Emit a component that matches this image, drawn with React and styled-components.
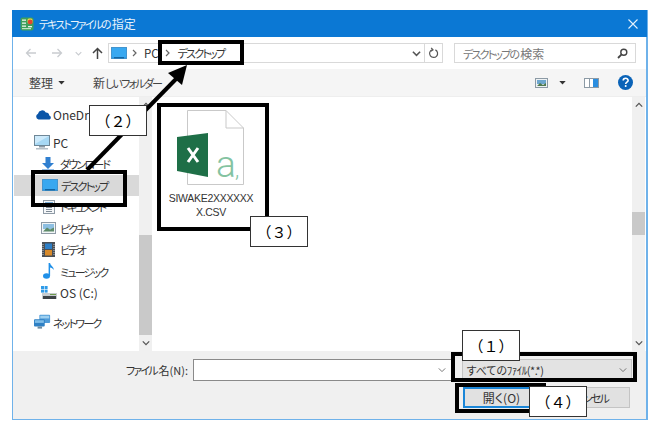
import React from "react";
import styled, { createGlobalStyle } from "styled-components";

const Global = createGlobalStyle`
  html, body { margin: 0; padding: 0; background: #fff; }
  body {
    width: 661px; height: 435px; overflow: hidden;
    font-family: "Noto Sans CJK JP", "Noto Sans", sans-serif;
    font-feature-settings: "palt";
  }
`;
const Page = styled.div`
  position: relative; width: 661px; height: 435px; padding: 10px 0 0 12px; box-sizing: border-box;
`;
const Dialog = styled.div`
  width: 636px; height: 410px; display: flex; flex-direction: column; box-sizing: border-box;
  border-left: 1px solid #6fb2ea; border-right: 2px solid #6fb2ea; border-bottom: 1px solid #6fb2ea; background: #fff; color: #222;
`;
const TitleBar = styled.div`
  height: 27px; margin: 0 -1px; flex: none; background: #0b78d4; display: flex; align-items: center;
  padding: 0 9px 0 8px; gap: 5px; font-size: 12px;
`;
const TitleText = styled.span`flex: 1; color: #e9f3fb;`;
const AddressRow = styled.div`
  height: 32px; flex: none; display: flex; align-items: center; padding: 0 10px 0 11px; background: #fff;
`;
const NavGroup = styled.div`display: flex; align-items: center; width: 84px;`;
const NavSlot = styled.span`
  width: ${p => p.$w}px; margin-left: ${p => p.$ml || 0}px; display: flex; align-items: center; justify-content: center;
`;
const AddressBox = styled.div`
  width: 335px; height: 20px; box-sizing: border-box; border: 1px solid #d9d9d9; display: flex; align-items: center;
  font-size: 11.5px; color: #333; margin-right: 11px; padding-left: 2px;
`;
const Crumb = styled.span`display: flex; align-items: center; margin-left: ${p => p.$ml || 0}px;`;
const RefreshCell = styled.span`
  width: 17px; height: 18px; margin-left: 3px; display: flex; align-items: center; justify-content: center; border-left: 1px solid #d9d9d9;
`;
const SearchBox = styled.div`
  width: 182px; height: 20px; box-sizing: border-box; border: 1px solid #d9d9d9; display: flex; align-items: center; justify-content: space-between;
  padding: 0 7px 0 8px; font-size: 12px; color: #777;
`;
const Toolbar = styled.div`
  height: 28px; flex: none; display: flex; align-items: center; background: #f5f5f5; padding: 0 13px 0 16px;
  font-size: 12px; color: #444; border-bottom: 1px solid #eee; box-sizing: border-box;
`;
const ToolButton = styled.span`display: flex; align-items: center; gap: ${p => p.$gap || 5}px; margin-right: ${p => p.$mr || 0}px;`;
const Spacer = styled.span`flex: 1;`;
const Main = styled.div`height: 254px; flex: none; display: flex; background: #fff;`;
const Sidebar = styled.nav`width: 126px; flex: none; display: flex; flex-direction: column; padding-top: 6px; box-sizing: border-box;`;
const Item = styled.div`
  height: ${p => p.$h || 21.5}px; flex: none; display: flex; align-items: center; padding-left: ${p => p.$indent}px; gap: ${p => p.$gap}px;
  font-size: 12px; color: #333; white-space: nowrap; background: ${p => p.$active ? "#d9d9d9" : "transparent"};
  margin-top: ${p => p.$mt || 0}px; margin-left: ${p => p.$active ? 1 : 0}px;
`;
const ScrollBar = styled.div`
  width: 13px; flex: none; margin-right: ${p => p.$mr || 0}px; background: #f0f0f0; display: flex; flex-direction: column; align-items: center;
`;
const ScrollArrow = styled.span`height: 16px; display: flex; align-items: center; justify-content: center; flex: none;`;
const Track = styled.div`flex: 1; width: 100%; display: flex; flex-direction: column;`;
const Thumb = styled.div`
  flex: none; height: ${p => p.$h}px; margin-top: ${p => p.$top}px; background: #c9c9c9; width: 100%;
`;
const Content = styled.div`flex: 1; padding: 13px 0 0 10px; background: #fff;`;
const FileTile = styled.div`width: 98px; display: flex; flex-direction: column; align-items: center;`;
const FileName = styled.div`
  margin-top: 5px; width: 98px; text-align: center; font-family: "Liberation Sans", sans-serif; font-size: 10.5px; line-height: 14px;
  color: #333; letter-spacing: -0.3px; white-space: nowrap;
`;
const Footer = styled.div`
  flex: 1; background: #f0f0f0; display: flex; flex-direction: column; padding: 8px 14px 0 0; box-sizing: border-box;
`;
const FieldRow = styled.div`display: flex; align-items: flex-start; justify-content: flex-end;`;
const FieldLabel = styled.span`font-size: 11px; color: #333; margin-right: 5px; line-height: 22px;`;
const NameInput = styled.div`
  width: 259px; height: 22px; box-sizing: border-box; background: #fff; border: 1px solid #8a8a8a; display: flex; align-items: center; justify-content: flex-end; padding-right: 5px; margin-right: 10px;
`;
const TypeSelect = styled.div`
  width: 170px; height: 22px; box-sizing: border-box; background: #e3e3e3; border: 1px solid #c4c4c4; display: flex; align-items: center; justify-content: space-between; padding: 0 4px 0 3px;
  font-size: 11px; color: #333; white-space: nowrap; font-feature-settings: normal; letter-spacing: -0.5px;
`;
const ButtonRow = styled.div`display: flex; justify-content: flex-end; gap: 7px; margin-top: 6px; margin-right: 2px;`;
const DialogButton = styled.div`
  height: 21px; width: ${p => p.$w}px; box-sizing: border-box; background: #e1e1e1; border: ${p => p.$primary ? "2px solid #1a86d8" : "1px solid #c4c4c4"};
  display: flex; align-items: center; justify-content: center; font-size: 12px; color: #333;
`;
const Frame = styled.div`
  position: absolute; left: ${p => p.$x}px; top: ${p => p.$y}px; width: ${p => p.$w}px; height: ${p => p.$h}px;
  box-sizing: border-box; border: 4px solid #000; pointer-events: none;
`;
const Note = styled.div`
  position: absolute; left: ${p => p.$x}px; top: ${p => p.$y}px; width: 58px; height: 31px; box-sizing: border-box;
  background: #fff; border: 1px solid #333; display: flex; align-items: center; justify-content: center;
  font-size: 15px; color: #000; font-feature-settings: normal;
`;
const ArrowLayer = styled.svg`position: absolute; left: 0; top: 0; width: 661px; height: 435px; pointer-events: none;`;
/* The dialog's UI font has compressed kana: kana runs get a tighter setting than kanji and latin. */
const KanaRun = styled.span`font-size: 11px; letter-spacing: -1.8px; margin-right: 1.8px;`;

const Jp = ({ children }) => (
  <span>
    {children.split(/([\u3040-\u30ff]+)/).map((run, i) =>
      i % 2 ? <KanaRun key={i}>{run}</KanaRun> : run
    )}
  </span>
);

const Chevron = ({ dir = "down", color = "#555", s = 9, w = 1.6 }) => (
  <svg width={s} height={s} viewBox="0 0 10 10" fill="none" stroke={color} strokeWidth={w}>
    <path d={dir === "down" ? "M1 3l4 4 4-4" : "M1 7l4-4 4 4"} />
  </svg>
);
const Sep = () => (
  <svg width="5" height="8" viewBox="0 0 5 8" fill="none" stroke="#666" strokeWidth="1.2"><path d="M1 1l3 3-3 3" /></svg>
);
const Caret = ({ c = "#333" }) => (
  <svg width="7" height="4" viewBox="0 0 8 5"><path d="M0 0h8L4 4.500z" fill={c} /></svg>
);
const HArrow = ({ flip, color = "#c9ccd0" }) => (
  <svg width="11" height="10" viewBox="0 0 11 10" fill="none" stroke={color} strokeWidth="1.3" style={flip ? { transform: "scaleX(-1)" } : undefined}>
    <path d="M11 5H1.500M5.500 1L1.500 5l4 4" />
  </svg>
);
const UpArrow = () => (
  <svg width="11" height="12" viewBox="0 0 11 12" fill="none" stroke="#444" strokeWidth="1.5"><path d="M5.500 12V1.500M1 6l4.500-4.500L10 6" /></svg>
);
const Refresh = () => (
  <svg width="11" height="12" viewBox="0 0 11 12" fill="none" stroke="#555" strokeWidth="1.2">
    <path d="M4 2.800a4 4 0 1 0 3.400.1" /><path d="M3.200 .8L5 2.900 2.800 4.200" />
  </svg>
);
const Magnifier = () => (
  <svg width="11" height="11" viewBox="0 0 11 11" fill="none" stroke="#444" strokeWidth="1.400"><circle cx="6.800" cy="4.200" r="3" /><path d="M4.600 6.400L1 10" strokeWidth="1.800" /></svg>
);
const TitleIcon = () => (
  <svg width="14" height="14" viewBox="0 0 14 14">
    <rect x="0.500" y="0.500" width="13" height="13" rx="2" fill="#3f9f5c" />
    <rect x="7.500" y="1.500" width="5" height="5" rx="1.500" fill="#e8e24a" />
    <circle cx="10.200" cy="5" r="2.400" fill="#e2452f" />
    <rect x="2" y="2.500" width="4" height="1.300" fill="#e9f5ea" /><rect x="2" y="5.500" width="4" height="1.300" fill="#e9f5ea" />
    <rect x="2" y="8.500" width="4" height="1.300" fill="#e9f5ea" /><rect x="8" y="9" width="4" height="1.300" fill="#e9f5ea" />
    <rect x="2" y="11" width="9" height="1.200" fill="#bfe3c6" />
  </svg>
);
const CloseX = () => (
  <svg width="10" height="10" viewBox="0 0 10 10" stroke="#e6f1fb" strokeWidth="1.100"><path d="M.5.500l9 9M9.500.500l-9 9" /></svg>
);
const DesktopIcon = ({ w = 16, h = 12 }) => (
  <svg width={w} height={h} viewBox="0 0 16 12">
    <rect x="0" y="0" width="16" height="12" fill="#2b9be8" stroke="#7a8a96" strokeWidth="0.600" />
    <rect x="1" y="1" width="14" height="9" fill="#38a8f0" />
    <rect x="3" y="10.300" width="10" height="1" fill="#0b4f85" />
  </svg>
);
const ViewIcon = () => (
  <svg width="13" height="10" viewBox="0 0 13 10">
    <rect x=".5" y=".5" width="12" height="9" fill="#eef2f4" stroke="#8c9aa5" />
    <rect x="2" y="2" width="9" height="4" fill="#6da7cf" /><path d="M2 8l3-3 3 2 3-2v3z" fill="#4f7a4f" />
  </svg>
);
const PaneIcon = () => (
  <svg width="15" height="10" viewBox="0 0 15 10">
    <rect x=".5" y=".5" width="14" height="9" fill="#fff" stroke="#8c9aa5" />
    <rect x="9" y="1" width="5" height="8" fill="#2b8ee0" /><rect x="5" y="1" width="1" height="8" fill="#8c9aa5" />
  </svg>
);
const HelpIcon = () => (
  <svg width="15" height="15" viewBox="0 0 15 15">
    <circle cx="7.500" cy="7.500" r="7.500" fill="#0a63b8" />
    <path d="M5.200 5.600c0-3 4.900-3 4.900-.2 0 1.800-2.400 1.800-2.400 3.600" fill="none" stroke="#fff" strokeWidth="1.600" />
    <circle cx="7.700" cy="11.100" r="1" fill="#fff" />
  </svg>
);
const CloudIcon = () => (
  <svg width="17" height="11" viewBox="0 0 17 11">
    <path d="M3.500 10.500A3 3 0 0 1 3 4.800 4.200 4.200 0 0 1 10.800 3.500 3.400 3.400 0 0 1 14.300 6.500 2.100 2.100 0 0 1 14.500 10.500z" fill="#0a55a8" />
  </svg>
);
const PcIcon = () => (
  <svg width="16" height="15" viewBox="0 0 16 15">
    <rect x=".5" y=".5" width="15" height="10" fill="#a7d8f4" stroke="#6f8797" />
    <path d="M1 1h14L1 9z" fill="#cdeafb" />
    <rect x="5" y="11" width="6" height="1.500" fill="#8b9aa5" /><rect x="2" y="13" width="12" height="1.500" fill="#b3bec6" />
  </svg>
);
const DownloadIcon = () => (
  <svg width="14" height="14" viewBox="0 0 14 14"><path d="M4.500 0h5v6H13L7 12 1 6h3.500z" fill="#2f7fd0" /><rect x="1" y="12.500" width="12" height="1.500" fill="#2f7fd0" /></svg>
);
const DocIcon = () => (
  <svg width="12" height="14" viewBox="0 0 12 14">
    <rect x=".5" y=".5" width="11" height="13" fill="#f5f7f9" stroke="#8f9ba6" />
    <rect x="2" y="2" width="8" height="3" fill="#7aaed8" />
    <path d="M3 7.500h6M3 9.500h6M3 11.500h6" stroke="#7f8b96" />
  </svg>
);
const PictureIcon = () => (
  <svg width="15" height="12" viewBox="0 0 15 12">
    <rect x=".5" y=".5" width="14" height="11" fill="#f1f5f7" stroke="#8f9ba6" />
    <rect x="2" y="2" width="11" height="5" fill="#8dbfe2" /><path d="M2 9.500l4-4 3 2 4-2v4z" fill="#5d8a68" />
  </svg>
);
const VideoIcon = () => (
  <svg width="13" height="15" viewBox="0 0 13 15">
    <rect width="13" height="15" fill="#4a4f55" />
    <rect x="3" y="1.500" width="7" height="5.500" fill="#2d7fc7" /><rect x="3" y="8" width="7" height="5.500" fill="#d88a2a" />
    <path d="M1 2v11M12 2v11" stroke="#bfc6cc" strokeDasharray="1 1" />
  </svg>
);
const MusicIcon = () => (
  <svg width="11" height="16" viewBox="0 0 11 16" fill="#2090e8">
    <ellipse cx="3.500" cy="13" rx="3.500" ry="2.800" />
    <path d="M5.600 13V0h1.500c.3 2.500 3.700 3.500 3.700 7-1-1.600-2.400-2.300-3.700-2.600V13z" />
  </svg>
);
const DriveIcon = () => (
  <svg width="17" height="14" viewBox="0 0 17 14">
    <g fill="#2f9be8"><rect x="0" y="0" width="3" height="3" /><rect x="3.600" y="0" width="3" height="3" /><rect x="0" y="3.600" width="3" height="3" /><rect x="3.600" y="3.600" width="3" height="3" /></g>
    <rect x="1" y="7" width="15" height="6" fill="#c6ccd0" /><rect x="2" y="10" width="13" height="3" fill="#3d4347" /><rect x="9" y="8" width="6" height="1" fill="#6f9a4c" />
  </svg>
);
const NetworkIcon = () => (
  <svg width="17" height="16" viewBox="0 0 19 16">
    <rect x="6" y="0" width="12" height="9" rx="1" fill="#4f9bd8" /><rect x="7" y="1" width="10" height="3" fill="#9ed0f0" />
    <rect x="0" y="5" width="12" height="8" rx="1" fill="#2f80c4" /><rect x="1" y="6" width="10" height="3" fill="#7fbde8" />
    <rect x="4" y="13" width="5" height="2.400" fill="#6b8aa0" />
  </svg>
);
const CsvIcon = () => (
  <svg width="68" height="76" viewBox="0 0 68 76">
    <path d="M10.500 .5H49L66.500 18V74.500H10.500z" fill="#fff" stroke="#c9c9c9" />
    <path d="M49 .5V18H66.500" fill="none" stroke="#c9c9c9" />
    <path d="M0 27L31 23V67L0 61z" fill="#1e6f47" />
    <path d="M11 38l10 14M21 38L11 52" stroke="#fff" strokeWidth="3" fill="none" />
    <text x="39" y="67" fontFamily="Roboto, sans-serif" fontWeight="300" fontSize="37" fill="#84c3a1">a</text>
    <text x="58" y="67" fontFamily="Roboto, sans-serif" fontWeight="300" fontSize="22" fill="#84c3a1">,</text>
  </svg>
);

const App = () => (
  <Page>
    <Global />
    <Dialog>
      <TitleBar>
        <TitleIcon />
        <TitleText><Jp>テキストファイルの指定</Jp></TitleText>
        <CloseX />
      </TitleBar>
      <AddressRow>
        <NavGroup>
          <NavSlot $w={12}><HArrow /></NavSlot>
          <NavSlot $w={12} $ml={15}><HArrow flip /></NavSlot>
          <NavSlot $w={8} $ml={11}><Chevron color="#c9ccd0" s={7} /></NavSlot>
          <NavSlot $w={12} $ml={9}><UpArrow /></NavSlot>
        </NavGroup>
        <AddressBox>
          <DesktopIcon />
          <Crumb $ml={5}><Sep /></Crumb>
          <Crumb $ml={7}>PC</Crumb>
          <Crumb $ml={6}><Sep /></Crumb>
          <Crumb $ml={8}><Jp>デスクトップ</Jp></Crumb>
          <Spacer />
          <Chevron s={9} w={1.7} />
          <RefreshCell><Refresh /></RefreshCell>
        </AddressBox>
        <SearchBox><Jp>デスクトップの検索</Jp><Magnifier /></SearchBox>
      </AddressRow>
      <Toolbar>
        <ToolButton $mr={28}>整理 <Caret /></ToolButton>
        <ToolButton><Jp>新しいフォルダー</Jp></ToolButton>
        <Spacer />
        <ToolButton $mr={18} $gap={11}><ViewIcon /><Caret /></ToolButton>
        <ToolButton $mr={19}><PaneIcon /></ToolButton>
        <HelpIcon />
      </Toolbar>
      <Main>
        <Sidebar>
          <Item $indent={22} $h={22} $gap={1}><CloudIcon />OneDrive</Item>
          <Item $indent={21} $h={22} $mt={6} $gap={3}><PcIcon />PC</Item>
          <Item $indent={28} $gap={5}><DownloadIcon /><Jp>ダウンロード</Jp></Item>
          <Item $indent={28} $active $gap={3}><DesktopIcon /><Jp>デスクトップ</Jp></Item>
          <Item $indent={30} $gap={5}><DocIcon /><Jp>ドキュメント</Jp></Item>
          <Item $indent={28} $gap={4}><PictureIcon /><Jp>ピクチャ</Jp></Item>
          <Item $indent={29} $gap={5}><VideoIcon /><Jp>ビデオ</Jp></Item>
          <Item $indent={30} $gap={6}><MusicIcon /><Jp>ミュージック</Jp></Item>
          <Item $indent={28} $gap={2}><DriveIcon />OS (C:)</Item>
          <Item $indent={21} $gap={2} $mt={8}><NetworkIcon /><Jp>ネットワーク</Jp></Item>
        </Sidebar>
        <ScrollBar>
          <ScrollArrow><Chevron dir="up" s={8} /></ScrollArrow>
          <Track><Thumb $top={122} $h={100} /></Track>
          <ScrollArrow><Chevron s={8} /></ScrollArrow>
        </ScrollBar>
        <Content>
          <FileTile>
            <CsvIcon />
            <FileName>SIWAKE2XXXXXX<br />X.CSV</FileName>
          </FileTile>
        </Content>
        <ScrollBar $mr={1}>
          <ScrollArrow><Chevron dir="up" s={8} /></ScrollArrow>
          <Track><Thumb $top={99} $h={23} /></Track>
          <ScrollArrow><Chevron s={8} /></ScrollArrow>
        </ScrollBar>
      </Main>
      <Footer>
        <FieldRow>
          <FieldLabel><Jp>ファイル名(N):</Jp></FieldLabel>
          <NameInput><Chevron s={8} w={1.1} color="#666" /></NameInput>
          <TypeSelect><span>すべてのﾌｧｲﾙ(*.*)</span><Chevron s={8} w={1.1} color="#666" /></TypeSelect>
        </FieldRow>
        <ButtonRow>
          <DialogButton $primary $w={77}>開く(O)</DialogButton>
          <DialogButton $w={83}><Jp>キャンセル</Jp></DialogButton>
        </ButtonRow>
      </Footer>
    </Dialog>

    <ArrowLayer viewBox="0 0 661 435">
      <path d="M87 170L176 79" stroke="#000" strokeWidth="4" fill="none" />
      <path d="M187 65L182 85L168 73z" fill="#000" />
    </ArrowLayer>
    <Frame $x={158} $y={40} $w={86} $h={25} />
    <Frame $x={31} $y={170} $w={96} $h={37} />
    <Frame $x={157} $y={103} $w={112} $h={128} />
    <Frame $x={451} $y={352} $w={186} $h={30} />
    <Frame $x={455} $y={383} $w={91} $h={30} />
    <Note $x={89} $y={105}>（２）</Note>
    <Note $x={250} $y={216}>（３）</Note>
    <Note $x={462} $y={330}>（１）</Note>
    <Note $x={529} $y={386}>（４）</Note>
  </Page>
);

export default App;
